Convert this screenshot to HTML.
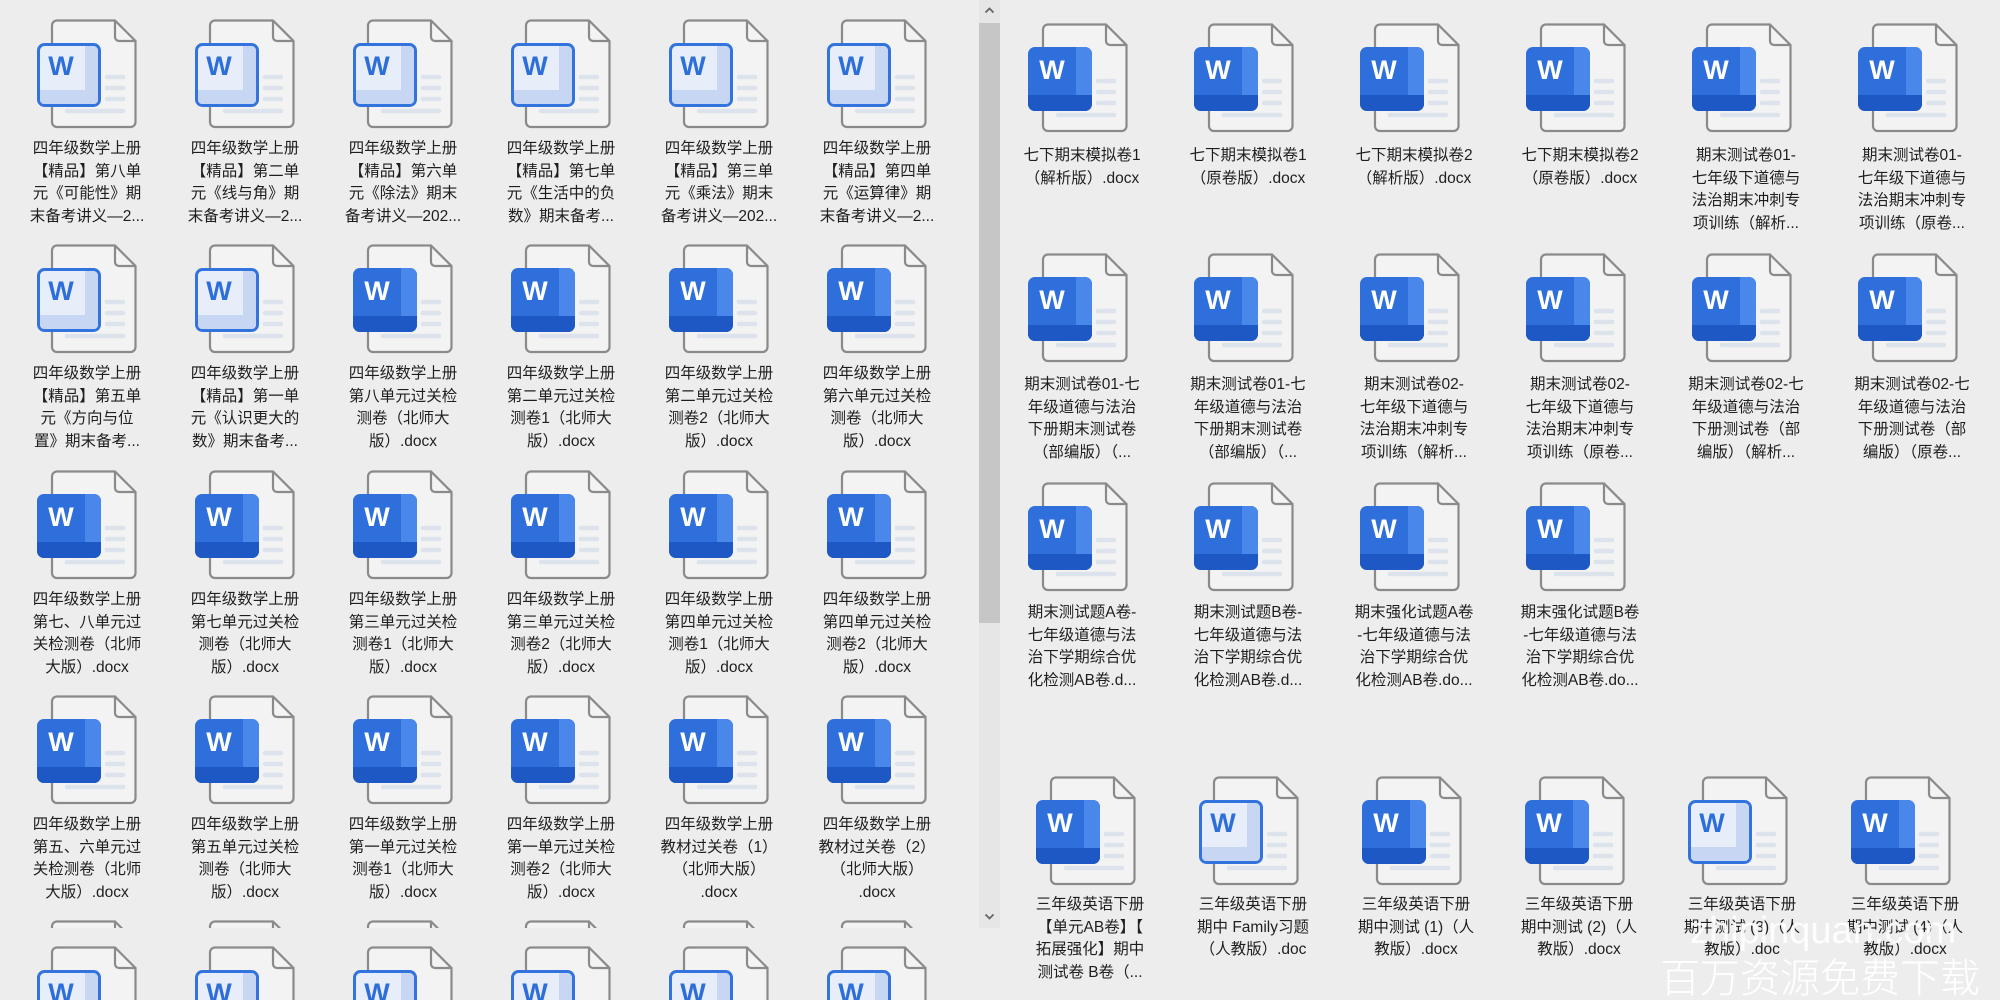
<!DOCTYPE html>
<html style="width:2000px;height:1000px;overflow:hidden"><head><meta charset="utf-8">
<style>
*{margin:0;padding:0;box-sizing:border-box}
body{width:2000px;height:1000px;background:#ededed;position:relative;overflow:hidden;font-family:"Liberation Sans","Noto Sans CJK SC",sans-serif;}
.ic{position:absolute;width:100px;height:110px}
.f5{position:absolute;width:100px;height:54px;top:946px}
.f4{position:absolute;width:100px;height:8px;top:920px}
.t{position:absolute;width:150px;text-align:center;font-size:15.5px;line-height:22.6px;color:#1e1e1e;white-space:nowrap}
.sb{position:absolute;left:979px;top:0;width:21px;height:928px;background:#e6e6e6}
.th{position:absolute;left:979px;top:23px;width:21px;height:600px;background:#c6c6c6}
.wm{position:absolute;color:#fff;font-family:"Liberation Sans","Noto Sans CJK SC",sans-serif;white-space:nowrap;line-height:1}
</style></head><body>
<svg width="0" height="0" style="position:absolute">
<defs>
<symbol id="doc" viewBox="0 0 100 110">
<path d="M20 1.5H78L98.5 22V103a5 5 0 0 1-5 5H20a5 5 0 0 1-5-5V6.5a5 5 0 0 1 5-5Z" fill="#f3f3f3" stroke="#8a8a8a" stroke-width="2.2"/>
<path d="M78 1.5V18a4 4 0 0 0 4 4H98.5" fill="none" stroke="#8a8a8a" stroke-width="2.2"/>
<g stroke="#dde3ec" stroke-width="4.5" stroke-linecap="round"><line x1="70" y1="58" x2="86" y2="58"/><line x1="70" y1="69" x2="86" y2="69"/><line x1="70" y1="80" x2="86" y2="80"/><line x1="30" y1="92" x2="86" y2="92"/></g>
</symbol>
<symbol id="sw" viewBox="0 0 100 110">
<use href="#doc"/>
<rect x="0" y="24" width="64" height="64" rx="7" fill="#2e6fdb"/>
<path d="M48 24h9a7 7 0 0 1 7 7v50a7 7 0 0 1-7 7h-9Z" fill="#4a87ea"/>
<path d="M0 72h64v9a7 7 0 0 1-7 7H7a7 7 0 0 1-7-7Z" fill="#1d58c4"/>
<text x="24" y="56" text-anchor="middle" font-family="Liberation Sans" font-weight="bold" font-size="27" fill="#fff">W</text>
</symbol>
<symbol id="lw" viewBox="0 0 100 110">
<use href="#doc"/>
<rect x="1.5" y="25.5" width="61" height="61" rx="6" fill="#e8eef9" stroke="#3273de" stroke-width="3"/>
<path d="M48 27h8a5 5 0 0 1 5 5v48a5 5 0 0 1-5 5h-8Z" fill="#c7d6f2"/>
<path d="M3 71h58v10a4 4 0 0 1-4 4H7a4 4 0 0 1-4-4Z" fill="#c7d6f2"/>
<text x="24" y="56" text-anchor="middle" font-family="Liberation Sans" font-weight="bold" font-size="27" fill="#2d6ed8">W</text>
</symbol>
</defs></svg>

<svg class="ic" style="left:37px;top:19px"><use href="#lw"/></svg>
<svg class="ic" style="left:195px;top:19px"><use href="#lw"/></svg>
<svg class="ic" style="left:353px;top:19px"><use href="#lw"/></svg>
<svg class="ic" style="left:511px;top:19px"><use href="#lw"/></svg>
<svg class="ic" style="left:669px;top:19px"><use href="#lw"/></svg>
<svg class="ic" style="left:827px;top:19px"><use href="#lw"/></svg>
<div class="t" style="left:12px;top:138px">四年级数学上册<br>【精品】第八单<br>元《可能性》期<br>末备考讲义—2...</div>
<div class="t" style="left:170px;top:138px">四年级数学上册<br>【精品】第二单<br>元《线与角》期<br>末备考讲义—2...</div>
<div class="t" style="left:328px;top:138px">四年级数学上册<br>【精品】第六单<br>元《除法》期末<br>备考讲义—202...</div>
<div class="t" style="left:486px;top:138px">四年级数学上册<br>【精品】第七单<br>元《生活中的负<br>数》期末备考...</div>
<div class="t" style="left:644px;top:138px">四年级数学上册<br>【精品】第三单<br>元《乘法》期末<br>备考讲义—202...</div>
<div class="t" style="left:802px;top:138px">四年级数学上册<br>【精品】第四单<br>元《运算律》期<br>末备考讲义—2...</div>
<svg class="ic" style="left:37px;top:244px"><use href="#lw"/></svg>
<svg class="ic" style="left:195px;top:244px"><use href="#lw"/></svg>
<svg class="ic" style="left:353px;top:244px"><use href="#sw"/></svg>
<svg class="ic" style="left:511px;top:244px"><use href="#sw"/></svg>
<svg class="ic" style="left:669px;top:244px"><use href="#sw"/></svg>
<svg class="ic" style="left:827px;top:244px"><use href="#sw"/></svg>
<div class="t" style="left:12px;top:363px">四年级数学上册<br>【精品】第五单<br>元《方向与位<br>置》期末备考...</div>
<div class="t" style="left:170px;top:363px">四年级数学上册<br>【精品】第一单<br>元《认识更大的<br>数》期末备考...</div>
<div class="t" style="left:328px;top:363px">四年级数学上册<br>第八单元过关检<br>测卷（北师大<br>版）.docx</div>
<div class="t" style="left:486px;top:363px">四年级数学上册<br>第二单元过关检<br>测卷1（北师大<br>版）.docx</div>
<div class="t" style="left:644px;top:363px">四年级数学上册<br>第二单元过关检<br>测卷2（北师大<br>版）.docx</div>
<div class="t" style="left:802px;top:363px">四年级数学上册<br>第六单元过关检<br>测卷（北师大<br>版）.docx</div>
<svg class="ic" style="left:37px;top:470px"><use href="#sw"/></svg>
<svg class="ic" style="left:195px;top:470px"><use href="#sw"/></svg>
<svg class="ic" style="left:353px;top:470px"><use href="#sw"/></svg>
<svg class="ic" style="left:511px;top:470px"><use href="#sw"/></svg>
<svg class="ic" style="left:669px;top:470px"><use href="#sw"/></svg>
<svg class="ic" style="left:827px;top:470px"><use href="#sw"/></svg>
<div class="t" style="left:12px;top:589px">四年级数学上册<br>第七、八单元过<br>关检测卷（北师<br>大版）.docx</div>
<div class="t" style="left:170px;top:589px">四年级数学上册<br>第七单元过关检<br>测卷（北师大<br>版）.docx</div>
<div class="t" style="left:328px;top:589px">四年级数学上册<br>第三单元过关检<br>测卷1（北师大<br>版）.docx</div>
<div class="t" style="left:486px;top:589px">四年级数学上册<br>第三单元过关检<br>测卷2（北师大<br>版）.docx</div>
<div class="t" style="left:644px;top:589px">四年级数学上册<br>第四单元过关检<br>测卷1（北师大<br>版）.docx</div>
<div class="t" style="left:802px;top:589px">四年级数学上册<br>第四单元过关检<br>测卷2（北师大<br>版）.docx</div>
<svg class="ic" style="left:37px;top:695px"><use href="#sw"/></svg>
<svg class="ic" style="left:195px;top:695px"><use href="#sw"/></svg>
<svg class="ic" style="left:353px;top:695px"><use href="#sw"/></svg>
<svg class="ic" style="left:511px;top:695px"><use href="#sw"/></svg>
<svg class="ic" style="left:669px;top:695px"><use href="#sw"/></svg>
<svg class="ic" style="left:827px;top:695px"><use href="#sw"/></svg>
<div class="t" style="left:12px;top:814px">四年级数学上册<br>第五、六单元过<br>关检测卷（北师<br>大版）.docx</div>
<div class="t" style="left:170px;top:814px">四年级数学上册<br>第五单元过关检<br>测卷（北师大<br>版）.docx</div>
<div class="t" style="left:328px;top:814px">四年级数学上册<br>第一单元过关检<br>测卷1（北师大<br>版）.docx</div>
<div class="t" style="left:486px;top:814px">四年级数学上册<br>第一单元过关检<br>测卷2（北师大<br>版）.docx</div>
<div class="t" style="left:644px;top:814px">四年级数学上册<br>教材过关卷（1）<br>（北师大版）<br>.docx</div>
<div class="t" style="left:802px;top:814px">四年级数学上册<br>教材过关卷（2）<br>（北师大版）<br>.docx</div>

<svg class="f4" style="left:37px" viewBox="0 0 100 8"><use href="#lw" width="100" height="110"/></svg>
<svg class="f4" style="left:195px" viewBox="0 0 100 8"><use href="#lw" width="100" height="110"/></svg>
<svg class="f4" style="left:353px" viewBox="0 0 100 8"><use href="#lw" width="100" height="110"/></svg>
<svg class="f4" style="left:511px" viewBox="0 0 100 8"><use href="#lw" width="100" height="110"/></svg>
<svg class="f4" style="left:669px" viewBox="0 0 100 8"><use href="#lw" width="100" height="110"/></svg>
<svg class="f4" style="left:827px" viewBox="0 0 100 8"><use href="#lw" width="100" height="110"/></svg>

<svg class="f5" style="left:37px" viewBox="0 0 100 54"><use href="#lw" width="100" height="110"/></svg>
<svg class="f5" style="left:195px" viewBox="0 0 100 54"><use href="#lw" width="100" height="110"/></svg>
<svg class="f5" style="left:353px" viewBox="0 0 100 54"><use href="#lw" width="100" height="110"/></svg>
<svg class="f5" style="left:511px" viewBox="0 0 100 54"><use href="#lw" width="100" height="110"/></svg>
<svg class="f5" style="left:669px" viewBox="0 0 100 54"><use href="#lw" width="100" height="110"/></svg>
<svg class="f5" style="left:827px" viewBox="0 0 100 54"><use href="#lw" width="100" height="110"/></svg>

<div class="sb"></div>
<div class="th"></div>
<svg style="position:absolute;left:984px;top:6px" width="11" height="8"><path d="M1.5 6.5L5.5 2.5L9.5 6.5" fill="none" stroke="#666" stroke-width="1.8"/></svg>
<svg style="position:absolute;left:984px;top:913px" width="11" height="8"><path d="M1.5 1.5L5.5 5.5L9.5 1.5" fill="none" stroke="#666" stroke-width="1.8"/></svg>

<svg class="ic" style="left:1028px;top:23px"><use href="#sw"/></svg>
<svg class="ic" style="left:1194px;top:23px"><use href="#sw"/></svg>
<svg class="ic" style="left:1360px;top:23px"><use href="#sw"/></svg>
<svg class="ic" style="left:1526px;top:23px"><use href="#sw"/></svg>
<svg class="ic" style="left:1692px;top:23px"><use href="#sw"/></svg>
<svg class="ic" style="left:1858px;top:23px"><use href="#sw"/></svg>
<div class="t" style="left:1007px;top:145px">七下期末模拟卷1<br>（解析版）.docx</div>
<div class="t" style="left:1173px;top:145px">七下期末模拟卷1<br>（原卷版）.docx</div>
<div class="t" style="left:1339px;top:145px">七下期末模拟卷2<br>（解析版）.docx</div>
<div class="t" style="left:1505px;top:145px">七下期末模拟卷2<br>（原卷版）.docx</div>
<div class="t" style="left:1671px;top:145px">期末测试卷01-<br>七年级下道德与<br>法治期末冲刺专<br>项训练（解析...</div>
<div class="t" style="left:1837px;top:145px">期末测试卷01-<br>七年级下道德与<br>法治期末冲刺专<br>项训练（原卷...</div>

<svg class="ic" style="left:1028px;top:253px"><use href="#sw"/></svg>
<svg class="ic" style="left:1194px;top:253px"><use href="#sw"/></svg>
<svg class="ic" style="left:1360px;top:253px"><use href="#sw"/></svg>
<svg class="ic" style="left:1526px;top:253px"><use href="#sw"/></svg>
<svg class="ic" style="left:1692px;top:253px"><use href="#sw"/></svg>
<svg class="ic" style="left:1858px;top:253px"><use href="#sw"/></svg>
<div class="t" style="left:1007px;top:374px">期末测试卷01-七<br>年级道德与法治<br>下册期末测试卷<br>（部编版）（...</div>
<div class="t" style="left:1173px;top:374px">期末测试卷01-七<br>年级道德与法治<br>下册期末测试卷<br>（部编版）（...</div>
<div class="t" style="left:1339px;top:374px">期末测试卷02-<br>七年级下道德与<br>法治期末冲刺专<br>项训练（解析...</div>
<div class="t" style="left:1505px;top:374px">期末测试卷02-<br>七年级下道德与<br>法治期末冲刺专<br>项训练（原卷...</div>
<div class="t" style="left:1671px;top:374px">期末测试卷02-七<br>年级道德与法治<br>下册测试卷（部<br>编版）（解析...</div>
<div class="t" style="left:1837px;top:374px">期末测试卷02-七<br>年级道德与法治<br>下册测试卷（部<br>编版）（原卷...</div>

<svg class="ic" style="left:1028px;top:482px"><use href="#sw"/></svg>
<svg class="ic" style="left:1194px;top:482px"><use href="#sw"/></svg>
<svg class="ic" style="left:1360px;top:482px"><use href="#sw"/></svg>
<svg class="ic" style="left:1526px;top:482px"><use href="#sw"/></svg>
<div class="t" style="left:1007px;top:602px">期末测试题A卷-<br>七年级道德与法<br>治下学期综合优<br>化检测AB卷.d...</div>
<div class="t" style="left:1173px;top:602px">期末测试题B卷-<br>七年级道德与法<br>治下学期综合优<br>化检测AB卷.d...</div>
<div class="t" style="left:1339px;top:602px">期末强化试题A卷<br>-七年级道德与法<br>治下学期综合优<br>化检测AB卷.do...</div>
<div class="t" style="left:1505px;top:602px">期末强化试题B卷<br>-七年级道德与法<br>治下学期综合优<br>化检测AB卷.do...</div>

<svg class="ic" style="left:1036px;top:776px"><use href="#sw"/></svg>
<svg class="ic" style="left:1199px;top:776px"><use href="#lw"/></svg>
<svg class="ic" style="left:1362px;top:776px"><use href="#sw"/></svg>
<svg class="ic" style="left:1525px;top:776px"><use href="#sw"/></svg>
<svg class="ic" style="left:1688px;top:776px"><use href="#lw"/></svg>
<svg class="ic" style="left:1851px;top:776px"><use href="#sw"/></svg>
<div class="t" style="left:1015px;top:894px">三年级英语下册<br>【单元AB卷】【<br>拓展强化】期中<br>测试卷 B卷（...</div>
<div class="t" style="left:1178px;top:894px">三年级英语下册<br>期中 Family习题<br>（人教版）.doc</div>
<div class="t" style="left:1341px;top:894px">三年级英语下册<br>期中测试 (1)（人<br>教版）.docx</div>
<div class="t" style="left:1504px;top:894px">三年级英语下册<br>期中测试 (2)（人<br>教版）.docx</div>
<div class="t" style="left:1667px;top:894px">三年级英语下册<br>期中测试 (3)（人<br>教版）.doc</div>
<div class="t" style="left:1830px;top:894px">三年级英语下册<br>期中测试 (4)（人<br>教版）.docx</div>

<div class="wm" style="left:1690px;top:912px;font-size:38px;opacity:.9">zhipinquan.com</div>
<div class="wm" style="left:1660px;top:955px;font-size:40px;font-family:'Noto Sans CJK SC',sans-serif;font-weight:300">百万资源免费下载</div>
</body></html>
